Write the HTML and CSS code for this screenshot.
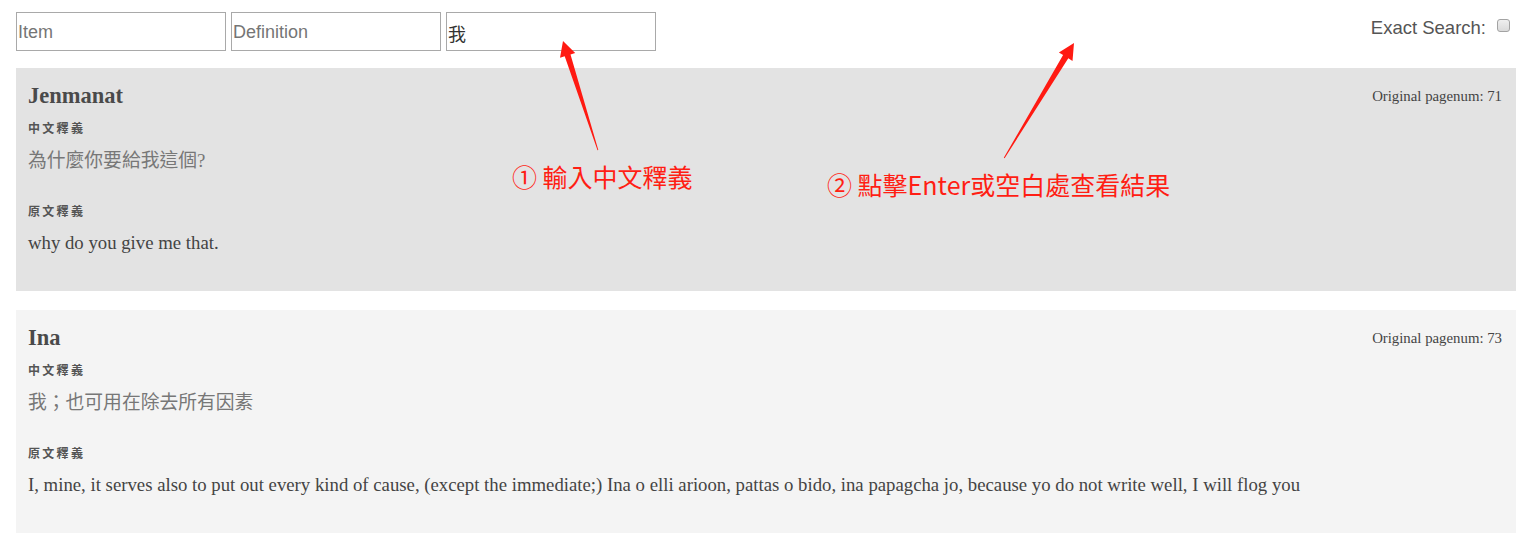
FILE: index.html
```html
<!DOCTYPE html>
<html lang="zh-Hant">
<head>
<meta charset="utf-8">
<title>Dictionary search</title>
<link rel="stylesheet" href="styles.css">
</head>
<body>
<div class="page">
  <header class="search-bar">
    <div class="fields">
      <input class="field" type="text" placeholder="Item">
      <input class="field" type="text" placeholder="Definition">
      <input class="field" type="text" value="我">
    </div>
    <label class="exact">Exact Search: <input class="check" type="checkbox"></label>
  </header>

  <main class="results">
    <section class="entry entry-first">
      <div class="entry-head">
        <h3 class="entry-title">Jenmanat</h3>
        <span class="pagenum">Original pagenum: 71</span>
      </div>
      <h5 class="entry-label">中文釋義</h5>
      <p class="entry-zh">為什麼你要給我這個?</p>
      <h5 class="entry-label entry-label-2">原文釋義</h5>
      <p class="entry-en">why do you give me that.</p>
    </section>

    <section class="entry entry-second">
      <div class="entry-head">
        <h3 class="entry-title">Ina</h3>
        <span class="pagenum">Original pagenum: 73</span>
      </div>
      <h5 class="entry-label">中文釋義</h5>
      <p class="entry-zh">我；也可用在除去所有因素</p>
      <h5 class="entry-label entry-label-2">原文釋義</h5>
      <p class="entry-en">I, mine, it serves also to put out every kind of cause, (except the immediate;) Ina o elli arioon, pattas o bido, ina papagcha jo, because yo do not write well, I will flog you</p>
    </section>
  </main>

  <div class="note note-1">① 輸入中文釋義</div>
  <div class="note note-2">② 點擊Enter或空白處查看結果</div>
  <svg class="arrows" width="1529" height="544" viewBox="0 0 1529 544">
    <polygon fill="#ff1a12" points="563,41 575.2,52.9 570.5,54.4 598.3,150 597.5,150.2 564.7,56.2 560,57.7"/>
    <polygon fill="#ff1a12" points="1074,43 1072.5,60.9 1068.3,58.3 1004.6,158.2 1003.8,157.8 1063.1,55.1 1058.9,52.5"/>
  </svg>
</div>
</body>
</html>
```

FILE: styles.css
```css
html, body {
  margin: 0;
  padding: 0;
  background: #fff;
}

.page {
  position: relative;
  width: 1529px;
  min-height: 544px;
  padding: 12px 13px 0 16px;
  box-sizing: border-box;
}

.search-bar {
  display: flex;
  justify-content: space-between;
  align-items: flex-start;
  height: 39px;
}

.fields {
  display: flex;
  gap: 5px;
}

.field {
  box-sizing: border-box;
  width: 210px;
  height: 39px;
  margin: 0;
  padding: 2px 1px 0;
  border: 1px solid #a9a9a9;
  border-radius: 0;
  font-family: "Liberation Sans", "Noto Sans CJK TC", sans-serif;
  font-size: 18px;
  color: #333;
  background: #fff;
  outline: none;
}

.field::placeholder {
  color: #757575;
}

.exact {
  display: flex;
  align-items: center;
  padding-top: 6px;
  font-family: "Liberation Sans", sans-serif;
  font-size: 18.5px;
  line-height: 20px;
  color: #555;
}

.check {
  -webkit-appearance: none;
  appearance: none;
  box-sizing: border-box;
  width: 13px;
  height: 13px;
  margin: -5px 6px 0 11px;
  border: 1px solid #a3a3a3;
  border-radius: 3px;
  background: linear-gradient(#efefef, #dadada);
}

.results {
  display: flex;
  flex-direction: column;
  gap: 19px;
  margin-top: 17px;
  width: 1500px;
}

.entry {
  padding: 15px 14px 36px 12px;
  color: #444;
  font-family: "Liberation Serif", "Noto Sans CJK TC", serif;
}

.entry-first {
  background: #e3e3e3;
}

.entry-second {
  background: #f4f4f4;
}

.entry-head {
  display: flex;
  justify-content: space-between;
  align-items: center;
  height: 26px;
}

.entry-title {
  margin: 0;
  font-size: 22.5px;
  line-height: 26px;
  font-weight: bold;
  color: #4a4a4a;
}

.pagenum {
  font-size: 14.8px;
  color: #444;
  padding-top: 1px;
}

.entry-label {
  margin: 11px 0 0;
  font-family: "Noto Sans CJK TC", sans-serif;
  font-size: 12px;
  line-height: 16px;
  letter-spacing: 2.3px;
  font-weight: bold;
  color: #555;
}

.entry-label-2 {
  margin-top: 30px;
}

.entry-zh {
  margin: 13px 0 0;
  font-size: 18.8px;
  line-height: 24px;
  color: #777;
}

.entry-en {
  margin: 12px 0 0;
  font-size: 18.75px;
  line-height: 24px;
  color: #444;
}

.note {
  position: absolute;
  font-family: "Noto Sans CJK TC", sans-serif;
  font-size: 25px;
  line-height: 30px;
  color: #ff1e14;
  white-space: nowrap;
}

.note-1 {
  left: 512px;
  top: 161px;
}

.note-2 {
  left: 827px;
  top: 169px;
}

.arrows {
  position: absolute;
  left: 0;
  top: 0;
  pointer-events: none;
}
```
